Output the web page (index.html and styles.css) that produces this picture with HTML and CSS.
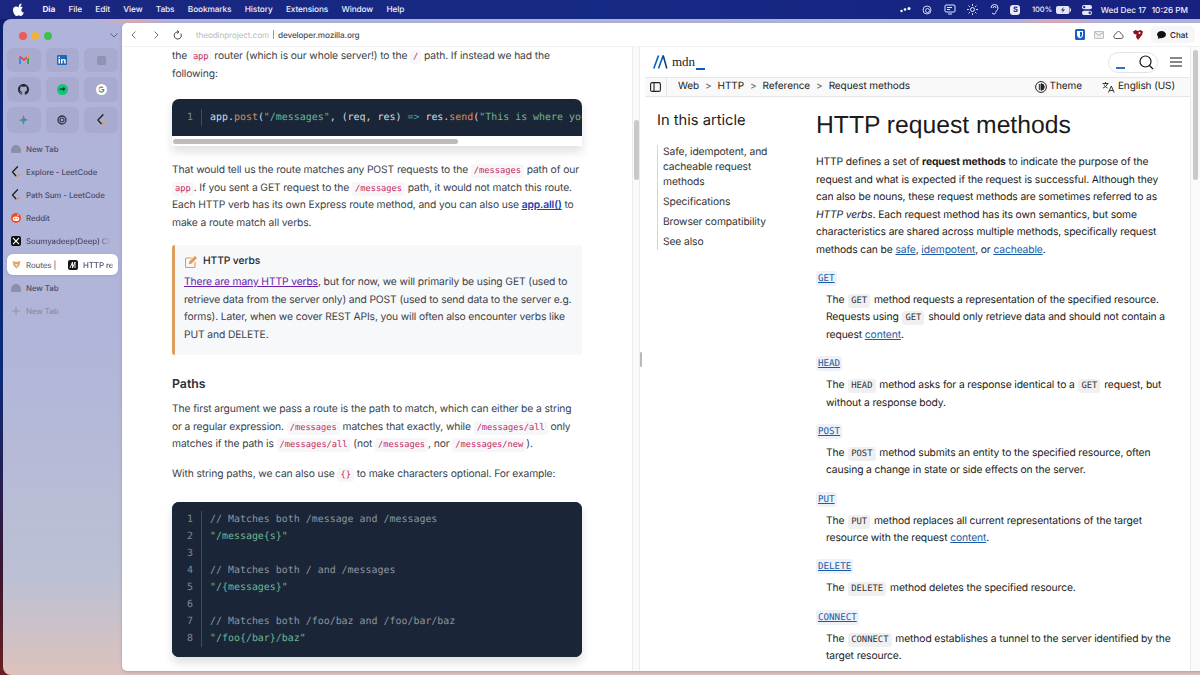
FILE: index.html
```html
<!DOCTYPE html>
<html lang="en">
<head>
    <meta charset="UTF-8">
    <title>HTTP request methods</title>
    <link rel="stylesheet" href="styles.css">
</head>
<body>
    <header class="menubar">
        <div class="menu-left">
            <svg class="apple" width="12" height="13" viewBox="0 0 24 26"><path fill="#fff" d="M17 1c.2 2-.6 3.500-1.500 4.600-1 1.200-2.500 2-4 1.900-.2-1.700.6-3.400 1.500-4.400C14 2 15.700 1.100 17 1zM22 19c-.6 1.400-.9 2-1.700 3.200-1.100 1.700-2.600 3.700-4.500 3.700-1.700 0-2.100-1.100-4.400-1.100s-2.800 1.100-4.400 1.100c-1.900 0-3.300-1.900-4.400-3.500C-.4 18 -.7 12.800 1 10.200c1.200-1.900 3.100-3 4.900-3 1.800 0 3 1.100 4.500 1.100s2.400-1.100 4.500-1.100c1.600 0 3.300.9 4.500 2.400-4 2.200-3.300 7.900.6 9.400z"/></svg>
            <b>Dia</b>
            <span>File</span>
            <span>Edit</span>
            <span>View</span>
            <span>Tabs</span>
            <span>Bookmarks</span>
            <span>History</span>
            <span>Extensions</span>
            <span>Window</span>
            <span>Help</span>
        </div>
        <div class="menu-right">
            <svg width="11" height="8" viewBox="0 0 11 8"><circle cx="1.500" cy="5" r="1.200" fill="#fff"/><circle cx="5" cy="3.500" r="1.300" fill="#fff"/><circle cx="9" cy="2.500" r="1.500" fill="#fff"/></svg>
            <svg width="10" height="10" viewBox="0 0 10 10" fill="none" stroke="#cfd3ee" stroke-width="1"><circle cx="5" cy="5" r="4"/><circle cx="5.500" cy="5.500" r="2"/></svg>
            <svg width="12" height="11" viewBox="0 0 12 11" fill="none" stroke="#e4e7f7" stroke-width="1"><rect x="1" y="1" width="10" height="7" rx="1"/><path d="M4 10h4M3 3.500h5M3 5.500h3"/></svg>
            <svg width="11" height="11" viewBox="0 0 11 11" fill="none" stroke="#e4e7f7" stroke-width="1"><circle cx="5.500" cy="5.500" r="2"/><path d="M5.500 0v1.800M5.500 9.200V11M0 5.500h1.800M9.200 5.500H11M1.600 1.600l1.300 1.300M8.100 8.100l1.300 1.300M1.600 9.400l1.300-1.300M8.100 2.900l1.300-1.300"/></svg>
            <svg width="9" height="11" viewBox="0 0 9 11" fill="none" stroke="#e4e7f7" stroke-width="1"><path d="M1 4a3.500 3.500 0 0 1 7 0c0 2-2 2.500-2.300 4.500S3 10.500 2 9"/><path d="M3 4a1.500 1.500 0 0 1 3 0"/></svg>
            <span class="s-badge">S</span>
            <span class="pct">100%</span>
            <span class="battery">
                <svg width="15" height="8" viewBox="0 0 15 8"><rect width="13.500" height="8" rx="2" fill="#e4e7f7"/><path d="M7.500 1L5 4.500h2L6 7l3-3.500H7z" fill="#1b2a7c"/><rect x="14" y="2.500" width="1" height="3" fill="#e4e7f7"/></svg>
            </span>
            <svg width="10" height="10" viewBox="0 0 10 10"><rect y="0" width="10" height="4.300" rx="2.100" fill="#e4e7f7"/><circle cx="2.200" cy="2.100" r="1.200" fill="#1b2a7c"/><rect y="5.700" width="10" height="4.300" rx="2.100" fill="#e4e7f7"/><circle cx="7.800" cy="7.800" r="1.200" fill="#1b2a7c"/></svg>
            <span class="clock">Wed Dec 17</span>
            <span class="clock">10:26 PM</span>
        </div>
    </header>

    <div class="window">
        <aside class="sidebar">
            <div class="traffic">
                <span class="light red"></span>
                <span class="light yellow"></span>
                <span class="light green"></span>
                <svg class="chev" width="8" height="5" viewBox="0 0 8 5" fill="none" stroke="#5c5f80" stroke-width="1"><path d="M.5.500L4 4 7.500.500"/></svg>
            </div>
            <div class="pins">
                <div class="pin">
                    <svg width="10" height="8" viewBox="0 0 10 8"><path d="M0 1v7h2V3z" fill="#4285f4"/><path d="M8 3v5h2V1z" fill="#34a853"/><path d="M0 1l5 4 5-4v-.500L8.500 0 5 2.700 1.500 0 0 .500z" fill="#ea4335"/><path d="M8 3l2-2V.500L8.500 0 8 .500z" fill="#fbbc04"/></svg>
                </div>
                <div class="pin">
                    <svg width="10" height="10" viewBox="0 0 10 10"><rect width="10" height="10" rx="1" fill="#1f66b5"/><rect x="1.500" y="4" width="1.500" height="4.500" fill="#fff"/><rect x="1.500" y="1.700" width="1.500" height="1.500" fill="#fff"/><path d="M4 4h1.400v.700C5.800 4.100 6.400 3.900 7 3.900c1.300 0 1.700.9 1.700 2v2.600H7.200V6.200c0-.6-.2-1-.8-1s-.9.500-.9 1v2.300H4z" fill="#fff"/></svg>
                </div>
                <div class="pin">
                    <span class="blank-icon"></span>
                </div>
                <div class="pin">
                    <svg width="11" height="11" viewBox="0 0 16 16"><path fill="#24292f" d="M8 0C3.580 0 0 3.580 0 8c0 3.540 2.290 6.530 5.470 7.590.4.070.55-.17.55-.38v-1.340c-2.230.48-2.700-1.070-2.700-1.070-.36-.92-.89-1.170-.89-1.170-.73-.5.050-.49.050-.49.800.060 1.230.82 1.230.82.710 1.220 1.870.87 2.330.66.070-.52.280-.87.510-1.070-1.780-.2-3.640-.89-3.640-3.950 0-.87.310-1.590.82-2.150-.08-.2-.36-1.020.08-2.120 0 0 .67-.21 2.200.82a7.600 7.600 0 0 1 4 0c1.530-1.040 2.200-.82 2.200-.82.440 1.100.160 1.920.080 2.120.51.560.82 1.270.82 2.150 0 3.070-1.870 3.750-3.650 3.950.29.250.54.730.54 1.480v2.190c0 .21.150.46.550.38A8 8 0 0 0 16 8c0-4.420-3.580-8-8-8z"/></svg>
                </div>
                <div class="pin">
                    <svg width="11" height="11" viewBox="0 0 11 11"><circle cx="5.500" cy="5.500" r="5.500" fill="#17c37b"/><path d="M2.500 4.500h3l1-1.500 2 2-2 2-1-1.200h-3z" fill="#0d3b2a"/></svg>
                </div>
                <div class="pin">
                    <svg width="11" height="11" viewBox="0 0 11 11"><circle cx="5.500" cy="5.500" r="5.500" fill="#fff"/><path d="M8.500 5.600c0-.3 0-.5-.1-.7H5.500v1.300h1.700c-.1.400-.3.800-.7 1l1 .8c.6-.6 1-1.400 1-2.400z" fill="#4285f4"/><path d="M5.500 8.600c.8 0 1.500-.3 2-.7l-1-.8c-.3.200-.6.300-1 .3-.8 0-1.400-.5-1.700-1.200l-1 .8c.5 1 1.500 1.600 2.700 1.600z" fill="#34a853"/><path d="M3.800 6.200c-.1-.4-.1-.9 0-1.300l-1-.8c-.4.800-.4 2 0 2.900z" fill="#fbbc04"/><path d="M5.500 3.700c.4 0 .8.100 1.100.4l.9-.9c-.5-.5-1.200-.8-2-.8-1.200 0-2.200.6-2.700 1.600l1 .8c.3-.6.900-1.100 1.700-1.100z" fill="#ea4335"/></svg>
                </div>
                <div class="pin">
                    <svg width="9" height="10" viewBox="0 0 9 10"><path d="M4.500 0l1.200 3.800L9 5 5.700 6.200 4.500 10 3.300 6.200 0 5l3.300-1.200z" fill="#4285f4"/><path d="M4.500 0l1.200 3.800L9 5 4.500 5z" fill="#e8453c"/><path d="M4.500 10L3.300 6.200 0 5l4.500 0z" fill="#34a853"/></svg>
                </div>
                <div class="pin">
                    <svg width="10" height="10" viewBox="0 0 10 10" fill="none" stroke="#33354a"><circle cx="5" cy="5" r="4" stroke-width="1.300"/><circle cx="5" cy="5" r="2" stroke-width="1.200"/></svg>
                </div>
                <div class="pin">
                    <svg class="lc-icon" width="9" height="12" viewBox="0 0 9 12" fill="none" stroke-width="1.300" stroke-linecap="round"><path d="M6 .8L1 6l3.500 4" stroke="#1d1d1f"/><path d="M4.500 10.500L8 8.500" stroke="#d99a4e"/><path d="M3 6h4" stroke="#b5b3bd"/></svg>
                </div>
            </div>
            <nav class="tabs">
                <div class="tab">
                    <span class="ghost"></span>
                    <span>New Tab</span>
                </div>
                <div class="tab">
                    <svg class="lc-icon" width="9" height="12" viewBox="0 0 9 12" fill="none" stroke-width="1.300" stroke-linecap="round"><path d="M6 .8L1 6l3.500 4" stroke="#1d1d1f"/><path d="M4.500 10.500L8 8.500" stroke="#d99a4e"/><path d="M3 6h4" stroke="#b5b3bd"/></svg>
                    <span>Explore - LeetCode</span>
                </div>
                <div class="tab">
                    <svg class="lc-icon" width="9" height="12" viewBox="0 0 9 12" fill="none" stroke-width="1.300" stroke-linecap="round"><path d="M6 .8L1 6l3.500 4" stroke="#1d1d1f"/><path d="M4.500 10.500L8 8.500" stroke="#d99a4e"/><path d="M3 6h4" stroke="#b5b3bd"/></svg>
                    <span>Path Sum - LeetCode</span>
                </div>
                <div class="tab">
                    <svg width="10" height="10" viewBox="0 0 10 10"><circle cx="5" cy="5" r="5" fill="#f04a23"/><ellipse cx="5" cy="5.800" rx="3.300" ry="2.300" fill="#fff"/><circle cx="3.700" cy="5.400" r=".6" fill="#f04a23"/><circle cx="6.300" cy="5.400" r=".6" fill="#f04a23"/><circle cx="7" cy="2" r=".7" fill="#fff"/></svg>
                    <span>Reddit</span>
                </div>
                <div class="tab">
                    <svg width="10" height="10" viewBox="0 0 10 10"><rect width="10" height="10" rx="2" fill="#0f0f12"/><path d="M2 2l6 6.200M8 2L2 8.200" stroke="#fff" stroke-width="1.100"/></svg>
                    <span class="clip">Soumyadeep(Deep) Chat</span>
                </div>
                <div class="tab active">
                    <div class="split-tab first">
                        <svg width="9" height="9" viewBox="0 0 9 9"><path d="M.5 1l4 1 4-1-1 4.500L4.500 8.500 1.500 5.500z" fill="#e2a765"/><path d="M3 4h3L4.500 7z" fill="#f4e3cd"/></svg>
                        <span>Routes |</span>
                    </div>
                    <div class="split-tab">
                        <svg width="10" height="10" viewBox="0 0 10 10"><rect width="10" height="10" rx="2" fill="#15151a"/><path d="M2 8L4.500 2v6L7 2v6" stroke="#fff" stroke-width=".9" fill="none"/></svg>
                        <span class="clip">HTTP re</span>
                    </div>
                </div>
                <div class="tab">
                    <span class="ghost"></span>
                    <span>New Tab</span>
                </div>
                <div class="tab muted">
                    <svg width="8" height="8" viewBox="0 0 8 8" stroke="#8e90a8"><path d="M4 0v8M0 4h8"/></svg>
                    <span>New Tab</span>
                </div>
            </nav>
        </aside>

        <main class="browser">
            <div class="toolbar">
                <div class="nav-btns">
                    <svg width="5" height="8" viewBox="0 0 5 8" fill="none" stroke="#77777c"><path d="M4.500.500L1 4l3.500 3.500"/></svg>
                    <svg width="5" height="8" viewBox="0 0 5 8" fill="none" stroke="#77777c"><path d="M.5.500L4 4 .5 7.500"/></svg>
                    <svg class="reload" width="9" height="10" viewBox="0 0 9 10" fill="none" stroke="#44444a"><path d="M7.800 3.500a3.600 3.600 0 1 1-2-1.500"/><path d="M4 .3L6 2 4 3.600" stroke-width=".9"/></svg>
                </div>
                <div class="urls">
                    <span class="url-dim">theodinproject.com</span>
                    <span class="url-sep"></span>
                    <span>developer.mozilla.org</span>
                </div>
                <div class="tool-icons">
                    <svg width="10" height="11" viewBox="0 0 10 11"><rect width="10" height="11" rx="1.500" fill="#1a5fc4"/><path d="M2 2h6v4c0 1.500-1.500 2.600-3 3.300C3.500 8.600 2 7.500 2 6z" fill="#fff"/><path d="M5 3h2v3c0 1-1 1.600-2 2.200z" fill="#1a5fc4"/></svg>
                    <svg width="10" height="8" viewBox="0 0 10 8" fill="#eee" stroke="#a6a6a8" stroke-width=".8"><rect x=".4" y=".4" width="9.200" height="7.200" rx="1"/><path d="M.5 1l4.500 3.500L9.500 1" fill="none"/></svg>
                    <svg width="11" height="8" viewBox="0 0 11 8" fill="none" stroke="#55555a"><path d="M2.500 7.500h6a2 2 0 0 0 .5-3.800L6.800 1a1.500 1.500 0 0 0-2.600 0L2 3.700a2 2 0 0 0 .5 3.800z"/></svg>
                    <svg width="10" height="10" viewBox="0 0 10 10"><path d="M0 1.500L2.500 0 5 1 7.500 0 10 1.500 9 5 5 10 3 7 3.500 4.500 1 4z" fill="#8f1220"/><circle cx="6.500" cy="3" r="1" fill="#fff"/></svg>
                    <div class="chat-btn">
                        <svg width="9" height="8" viewBox="0 0 9 8"><path d="M4.500 0C6.900 0 9 1.500 9 3.600S6.900 7.200 4.500 7.200c-.5 0-1 0-1.400-.2L.8 8l.5-2C.5 5.300 0 4.500 0 3.600 0 1.500 2.100 0 4.500 0z" fill="#111"/></svg>
                        <span>Chat</span>
                    </div>
                </div>
            </div>

            <div class="panes">
                <section class="odin">
                    <p class="flush">the <code>app</code> router (which is our whole server!) to the <code>/</code> path. If instead we had the following:</p>

                    <div class="code-block scrolly">
                        <div class="code-inner">
                            <div class="gutter"><span>1</span></div>
                            <pre>app<i>.</i><em class="fn">post</em>(<em class="str">"/messages"</em>, (req, res) <em class="arrow">=&gt;</em> res.<em class="fn">send</em>(<em class="str">"This is where you</em></pre>
                        </div>
                        <div class="hscroll"><span></span></div>
                    </div>

                    <p>That would tell us the route matches any POST requests to the <code>/messages</code> path of our <code>app</code>. If you sent a GET request to the <code>/messages</code> path, it would not match this route. Each HTTP verb has its own Express route method, and you can also use <a class="link" href="#">app.all()</a> to make a route match all verbs.</p>

                    <div class="callout">
                        <div class="callout-title">
                            <svg width="12" height="12" viewBox="0 0 12 12" fill="none" stroke="#e09a52" stroke-width="1.100"><path d="M6.500 2H1.500a1 1 0 0 0-1 1v7.500a1 1 0 0 0 1 1H9a1 1 0 0 0 1-1V6"/><path d="M4.500 7.500l.5-2L10 .7l1.300 1.300-5 5z" fill="#e09a52"/></svg>
                            <span>HTTP verbs</span>
                        </div>
                        <p><a class="visited" href="#">There are many HTTP verbs</a>, but for now, we will primarily be using GET (used to retrieve data from the server only) and POST (used to send data to the server e.g. forms). Later, when we cover REST APIs, you will often also encounter verbs like PUT and DELETE.</p>
                    </div>

                    <h3>Paths</h3>

                    <p>The first argument we pass a route is the path to match, which can either be a string or a regular expression. <code>/messages</code> matches that exactly, while <code>/messages/all</code> only matches if the path is <code>/messages/all</code> (not <code>/messages</code>, nor <code>/messages/new</code>).</p>

                    <p>With string paths, we can also use <code>{}</code> to make characters optional. For example:</p>

                    <div class="code-block after-text">
                        <div class="code-inner tall">
                            <div class="gutter">
                                <span>1</span><span>2</span><span>3</span><span>4</span><span>5</span><span>6</span><span>7</span><span>8</span>
                            </div>
<pre><em class="cmt">// Matches both /message and /messages</em>
<em class="str">"/message{s}"</em>

<em class="cmt">// Matches both / and /messages</em>
<em class="str">"/{messages}"</em>

<em class="cmt">// Matches both /foo/baz and /foo/bar/baz</em>
<em class="str">"/foo{/bar}/baz"</em></pre>
                        </div>
                    </div>
                </section>

                <div class="splitter">
                    <span class="split-thumb"></span>
                    <span class="split-handle"></span>
                </div>

                <section class="mdn">
                    <div class="mdn-scroll">
                        <div class="mdn-head">
                            <div class="mdn-logo">
                                <svg width="15" height="14" viewBox="0 0 15 14" fill="none" stroke-width="1.600"><path d="M.8 13.500L5.500.5" stroke="#0b5cc0"/><path d="M5.500 13.500L10.200.5" stroke="#0b5cc0"/><path d="M10.200.5L13.800 13.500" stroke="#13447f"/></svg>
                                <span class="mdn-word">mdn</span><span class="mdn-under"></span>
                            </div>
                            <div class="mdn-tools">
                                <div class="search-pill">
                                    <span class="pill-under"></span>
                                    <svg width="15" height="15" viewBox="0 0 15 15" fill="none" stroke="#111" stroke-width="1.200"><circle cx="6.500" cy="6.500" r="5.500"/><path d="M10.500 10.500L14 14"/></svg>
                                </div>
                                <svg width="12" height="10" viewBox="0 0 12 10" stroke="#111" stroke-width="1.200"><path d="M0 1h12M0 5h12M0 9h12"/></svg>
                            </div>
                        </div>
                        <div class="crumbs">
                            <div class="crumb-toggle">
                                <svg width="11" height="10" viewBox="0 0 11 10" fill="none" stroke="#222" stroke-width="1.100"><rect x=".6" y=".6" width="9.800" height="8.800" rx="1.500"/><path d="M4 .6v8.800"/></svg>
                            </div>
                            <div class="crumb-links">
                                <span>Web</span><i>&gt;</i><span>HTTP</span><i>&gt;</i><span>Reference</span><i>&gt;</i><span>Request methods</span>
                            </div>
                            <div class="crumb-right">
                                <span class="crumb-item">
                                    <svg width="12" height="12" viewBox="0 0 12 12" fill="none" stroke="#222"><circle cx="6" cy="6" r="5.400"/><path d="M6 2.800a3.200 3.200 0 0 1 0 6.400z" fill="#222"/><path d="M4.300 3v6"/></svg>
                                    Theme
                                </span>
                                <span class="crumb-item">
                                    <svg width="13" height="12" viewBox="0 0 13 12" fill="none" stroke="#222" stroke-width=".9"><path d="M.5 2.500h6M3.500 1v1.500M5.500 2.500C5 4.500 3 6.500 1 7M2 3.500C2.500 5 4 6.500 5.500 7"/><path d="M6.500 11.500L9.300 5l2.800 6.500M7.500 9.500h3.800"/></svg>
                                    English (US)
                                </span>
                            </div>
                        </div>
                        <div class="mdn-body">
                            <nav class="toc">
                                <h2>In this article</h2>
                                <ul>
                                    <li>Safe, idempotent, and cacheable request methods</li>
                                    <li>Specifications</li>
                                    <li>Browser compatibility</li>
                                    <li>See also</li>
                                </ul>
                            </nav>
                            <article class="article">
                                <h1>HTTP request methods</h1>
                                <p>HTTP defines a set of <strong>request methods</strong> to indicate the purpose of the request and what is expected if the request is successful. Although they can also be nouns, these request methods are sometimes referred to as <em>HTTP verbs</em>. Each request method has its own semantics, but some characteristics are shared across multiple methods, specifically request methods can be <a href="#">safe</a>, <a href="#">idempotent</a>, or <a href="#">cacheable</a>.</p>
                                <dl>
                                    <dt><a href="#">GET</a></dt>
                                    <dd>The <code>GET</code> method requests a representation of the specified resource. Requests using <code>GET</code> should only retrieve data and should not contain a request <a href="#">content</a>.</dd>
                                    <dt><a href="#">HEAD</a></dt>
                                    <dd>The <code>HEAD</code> method asks for a response identical to a <code>GET</code> request, but without a response body.</dd>
                                    <dt><a href="#">POST</a></dt>
                                    <dd>The <code>POST</code> method submits an entity to the specified resource, often causing a change in state or side effects on the server.</dd>
                                    <dt><a href="#">PUT</a></dt>
                                    <dd>The <code>PUT</code> method replaces all current representations of the target resource with the request <a href="#">content</a>.</dd>
                                    <dt><a href="#">DELETE</a></dt>
                                    <dd>The <code>DELETE</code> method deletes the specified resource.</dd>
                                    <dt><a href="#">CONNECT</a></dt>
                                    <dd>The <code>CONNECT</code> method establishes a tunnel to the server identified by the target resource.</dd>
                                </dl>
                            </article>
                        </div>
                    </div>
                    <div class="mdn-track"><span></span></div>
                </section>
            </div>
        </main>
    </div>
</body>
</html>
```

FILE: styles.css
```css
* {
    margin: 0;
    padding: 0;
    box-sizing: border-box;
}
html, body {
    height: 675px;
    overflow: hidden;
}
body {
    font-family: Inter, "Liberation Sans", sans-serif;
    text-rendering: geometricPrecision;
    background: linear-gradient(180deg, #0b1f6e 0%, #0a2a78 55%, #3a1530 85%, #6b2020 100%);
    color: #222;
    display: flex;
    flex-direction: column;
}

/* mac menu bar */
.menubar {
    height: 19px;
    flex: none;
    display: flex;
    justify-content: space-between;
    align-items: center;
    padding: 0 13px;
    background: linear-gradient(90deg, #1b2680, #152a84 50%, #182080);
    color: #eef0fb;
    font-size: 8.3px;
    letter-spacing: -.12px;
    font-weight: 500;
}
.menu-left {
    display: flex;
    align-items: center;
    gap: 13.4px;
}
.menu-left b {
    font-weight: 700;
    margin-left: 2px;
}
.apple {
    margin-right: 2px;
}
.menu-right {
    display: flex;
    align-items: center;
    gap: 11.5px;
    margin-right: -1px;
}
.s-badge {
    width: 10px;
    height: 10px;
    border-radius: 3px;
    background: #e9ebf8;
    color: #1b2680;
    font-size: 7.5px;
    font-weight: 700;
    display: flex;
    align-items: center;
    justify-content: center;
}
.pct {
    font-size: 7.5px;
    letter-spacing: 0;
}
.battery {
    display: flex;
    margin-left: -8px;
}
.clock {
    font-size: 8.2px;
    letter-spacing: 0;
    margin-left: -3px;
}
.clock + .clock {
    margin-left: -6px;
}

/* window */
.window {
    flex: 1;
    margin-left: 3px;
    display: flex;
    border-radius: 8px 0 0 8px;
    background:
        linear-gradient(90deg, transparent 8%, #dcaab4 11%, transparent 14%, transparent 84%, #dcaab4 88%, transparent 92%) top / 100% 4px no-repeat,
        linear-gradient(180deg, #b0b3da 0%, #b1b5d9 50%, #bcc0d4 85%, #dcc2bd 100%);
    padding-top: 4px;
    overflow: hidden;
}
.sidebar {
    width: 119px;
    flex: none;
    padding: 0 4px;
}
.traffic {
    height: 25px;
    display: flex;
    align-items: center;
    gap: 4.5px;
    padding-left: 11.5px;
}
.light {
    width: 8px;
    height: 8px;
    border-radius: 50%;
}
.red {
    background: #ef5a55;
}
.yellow {
    background: #f3b13c;
}
.green {
    background: #3fc04b;
}
.chev {
    margin-left: 54px;
}
.pins {
    display: grid;
    grid-template-columns: repeat(3, 1fr);
    gap: 5px;
    height: 85px;
}
.pin {
    border-radius: 6px;
    background: #a8abcf;
    display: flex;
    align-items: center;
    justify-content: center;
}
.blank-icon {
    width: 9px;
    height: 9px;
    border-radius: 2px;
    background: #8f92b3;
}
.tabs {
    margin-top: 5px;
    display: flex;
    flex-direction: column;
    gap: 2px;
    font-size: 7.9px;
    letter-spacing: -.08px;
    font-weight: 500;
    color: #4a4b68;
}
.tab {
    height: 21px;
    display: flex;
    align-items: center;
    gap: 5px;
    padding-left: 4px;
    white-space: nowrap;
    overflow: hidden;
}
.tab > svg:first-child, .ghost {
    width: 10px;
    flex: none;
}
.ghost {
    height: 8px;
    border-radius: 5px 5px 1px 1px;
    background: #8d8fa8;
}
.clip {
    overflow: hidden;
    flex: 1;
    margin-right: 7px;
    -webkit-mask-image: linear-gradient(90deg, #000 85%, transparent);
    mask-image: linear-gradient(90deg, #000 85%, transparent);
}
.tab.active {
    background: #fff;
    border-radius: 6px;
    padding-left: 0;
    gap: 0;
    margin-top: 1px;
    box-shadow: 0 1px 3px rgba(60, 60, 100, .15);
}
.split-tab {
    flex: 1;
    display: flex;
    align-items: center;
    gap: 5px;
    padding-left: 5px;
    min-width: 0;
    overflow: hidden;
}
.split-tab.first {
    color: #6b6b78;
    flex: none;
    width: 56px;
}
.split-tab .clip {
    margin-right: 3px;
}
.tab.muted {
    color: #8a8ca6;
}

/* browser */
.browser {
    flex: 1;
    min-width: 0;
    height: 648px;
    background: #fff;
    border-radius: 5px 0 0 5px;
    display: flex;
    flex-direction: column;
    overflow: hidden;
    box-shadow: 0 1px 3px rgba(80, 60, 80, .3);
}
.toolbar {
    height: 24px;
    flex: none;
    display: flex;
    align-items: center;
    padding: 0 5px 0 9px;
    border-bottom: 1px solid #f2f2f3;
    font-size: 8.2px;
    letter-spacing: -.12px;
    font-weight: 500;
    color: #4d4d55;
}
.nav-btns {
    display: flex;
    align-items: center;
    gap: 18px;
    width: 65px;
}
.nav-btns .reload {
    margin-left: -4px;
}
.urls {
    flex: 1;
    display: flex;
    align-items: center;
    gap: 4px;
}
.url-dim {
    color: #b9b9be;
    font-weight: 400;
}
.url-sep {
    width: 1px;
    height: 9px;
    background: #9a9aa0;
}
.tool-icons {
    display: flex;
    align-items: center;
    gap: 9px;
}
.chat-btn {
    display: flex;
    align-items: center;
    gap: 4px;
    height: 17px;
    padding: 0 7px 0 6px;
    margin-left: -1px;
    border-radius: 5px;
    background: #f6f6f7;
    font-size: 8px;
    letter-spacing: 0;
    color: #222;
}
.panes {
    flex: 1;
    min-height: 0;
    display: flex;
}

/* odin project pane */
.odin {
    width: 510px;
    flex: none;
    padding: 0 50px;
    font-size: 10.3px;
    letter-spacing: -.12px;
    line-height: 17.5px;
    color: #3b3f49;
    overflow: hidden;
}
.odin p {
    margin-top: 12.5px;
}
.odin p.flush {
    margin-top: 1px;
}
.code-block + p {
    margin-top: 16px;
}
.odin code {
    font-family: "DejaVu Sans Mono", monospace;
    font-size: 8.7px;
    letter-spacing: 0;
    line-height: 1;
    color: #c22a61;
    background: #f7f6f9;
    border-radius: 3px;
    padding: 2px 3px;
}
.link {
    color: #1e40af;
    font-weight: 600;
}
.visited {
    color: #6b21a8;
}
.code-block {
    margin-top: 16px;
    border-radius: 7px;
    background: #1a2638;
    overflow: hidden;
    font-family: "DejaVu Sans Mono", monospace;
    font-size: 9.95px;
    letter-spacing: 0;
    line-height: 17px;
    box-shadow: 0 6px 10px rgba(0, 0, 0, .12);
}
.code-block.after-text {
    margin-top: 18px;
}
.code-block.scrolly {
    border-radius: 7px 7px 0 0;
    background: #fff;
}
.code-inner {
    display: flex;
    padding: 10px 0 10px 15px;
    background: #1a2638;
    color: #d5dae1;
    overflow: hidden;
}
.code-inner.tall {
    padding-top: 9.5px;
    padding-bottom: 9.5px;
}
.gutter {
    display: flex;
    flex-direction: column;
    width: 15px;
    flex: none;
    color: #7f8894;
    border-right: 1px solid #414b5a;
    margin-right: 8px;
}
.code-inner pre {
    font: inherit;
    white-space: pre;
}
.code-inner em, .code-inner i {
    font-style: normal;
}
.fn {
    color: #d98a5f;
}
.str {
    color: #6fb595;
}
.arrow {
    color: #4fa8b8;
}
.cmt {
    color: #8f959e;
}
.hscroll {
    height: 10px;
    padding: 2.5px 1px;
    background: #fff;
}
.hscroll span {
    display: block;
    width: 285px;
    height: 5px;
    border-radius: 3px;
    background: #bdbcba;
}
.callout {
    margin-top: 13px;
    height: 110px;
    border-left: 3px solid #dd9f5b;
    border-radius: 3px;
    background: #f7f8fa;
    padding: 8px 10px 0 9px;
    color: #3b3f49;
}
.odin .callout p {
    margin-top: 3.5px;
}
.callout-title {
    display: flex;
    align-items: center;
    gap: 6px;
    font-weight: 500;
    color: #1f2430;
    padding-left: 1px;
}
.odin h3 {
    margin-top: 20px;
    font-size: 12.3px;
    letter-spacing: 0;
    font-weight: 600;
    line-height: 18px;
    color: #2a2e38;
}
.odin h3 + p {
    margin-top: 8px;
}

/* splitter between the two panes */
.splitter {
    width: 8px;
    flex: none;
    position: relative;
    background: #fafafa;
    border-left: 1px solid #ececee;
    border-right: 1px solid #ececee;
}
.split-thumb {
    position: absolute;
    left: 1px;
    top: 73px;
    width: 5px;
    height: 60px;
    border-radius: 3px;
    background: #c9c9cb;
}
.split-handle {
    position: absolute;
    right: -3px;
    top: 305px;
    width: 2px;
    height: 15px;
    background: #b9b9bd;
    border-radius: 1px;
}

/* mdn pane */
.mdn {
    flex: 1;
    min-width: 0;
    display: flex;
    font-size: 10.3px;
    letter-spacing: -.12px;
    line-height: 17.5px;
    color: #1b1b1b;
}
.mdn-scroll {
    flex: 1;
    min-width: 0;
    padding-left: 5px;
    overflow: hidden;
}
.mdn-track {
    width: 10px;
    flex: none;
    background: #fafafa;
    border-left: 1px solid #ececee;
    padding: 3px 2px;
}
.mdn-track span {
    display: block;
    height: 130px;
    border-radius: 3px;
    background: #c9c9cb;
}
.mdn-head {
    height: 30px;
    display: flex;
    align-items: center;
    justify-content: space-between;
    padding: 0 8px;
}
.mdn-logo {
    display: flex;
    align-items: center;
    gap: 4px;
}
.mdn-word {
    font-family: "Liberation Serif", serif;
    font-size: 13px;
    letter-spacing: 0;
    color: #222;
}
.mdn-under {
    width: 9px;
    height: 1.5px;
    background: #0b5cc0;
    align-self: flex-end;
    margin-left: -3px;
    margin-bottom: 1px;
}
.mdn-tools {
    display: flex;
    align-items: center;
    gap: 12px;
}
.search-pill {
    width: 50px;
    height: 21px;
    border: 1px solid #e2e2e4;
    border-radius: 11px;
    display: flex;
    align-items: center;
    justify-content: flex-end;
    gap: 14px;
    padding-right: 3px;
}
.pill-under {
    width: 9px;
    height: 1.5px;
    background: #2f6fc4;
    margin-top: 12px;
}
.crumbs {
    height: 20px;
    display: flex;
    align-items: center;
    background: #f9f9f9;
    border-top: 1px solid #e6e6e6;
    border-bottom: 1px solid #e6e6e6;
    font-size: 10px;
    letter-spacing: -.08px;
    color: #222;
}
.crumb-toggle {
    width: 22px;
    height: 100%;
    display: flex;
    align-items: center;
    justify-content: center;
    border-right: 1px solid #e6e6e6;
    flex: none;
}
.crumb-links {
    flex: 1;
    display: flex;
    align-items: center;
    gap: 6px;
    padding-left: 11px;
}
.crumb-links i {
    font-style: normal;
    color: #666;
    font-size: 10px;
}
.crumb-right {
    display: flex;
    align-items: center;
    gap: 20px;
    padding-right: 15px;
}
.crumb-item {
    display: flex;
    align-items: center;
    gap: 3px;
}
.mdn-body {
    display: flex;
    padding-top: 12px;
}
.toc {
    width: 171px;
    flex: none;
    padding-left: 12px;
}
.toc h2 {
    font-size: 14.7px;
    letter-spacing: 0;
    font-weight: 400;
    line-height: 22px;
    color: #1b1b1b;
}
.toc ul {
    list-style: none;
    margin-top: 14px;
    border-left: 1px solid #d5d5d5;
    padding-left: 5px;
    width: 125px;
}
.toc li {
    margin-bottom: 5px;
    line-height: 15px;
    color: #333;
}
.article {
    flex: 1;
    min-width: 0;
    padding: 2px 14px 0 0;
}
.article h1 {
    font-size: 24.7px;
    letter-spacing: 0;
    font-weight: 400;
    line-height: 30px;
    color: #1b1b1b;
    font-family: "Liberation Sans", sans-serif;
}
.article p {
    margin-top: 13px;
}
.article a {
    color: #1a5aa6;
}
.article dt {
    margin-top: 10.75px;
    line-height: 17px;
}
.article dt a, .article code {
    font-family: "DejaVu Sans Mono", monospace;
    font-size: 9.2px;
    letter-spacing: 0;
    line-height: 1;
    padding: 2px;
    border-radius: 3px;
    background: #f0f0f1;
}
.article dt a {
    background: #eef2f8;
}
.article code {
    font-size: 8.9px;
    padding: 2px 3px;
    margin: 0 1px;
    color: #333;
}
.article dd {
    margin: 5px 0 0 10px;
}
```
